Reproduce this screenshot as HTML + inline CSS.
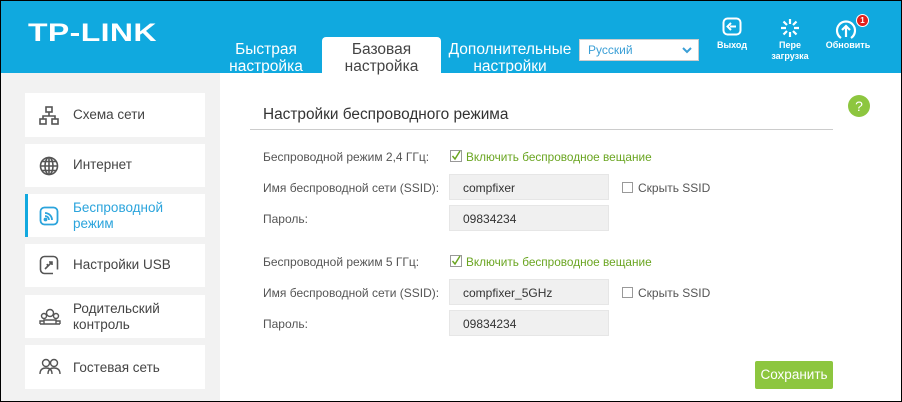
<!DOCTYPE html>
<html><head><meta charset="utf-8">
<style>
*{margin:0;padding:0;box-sizing:border-box}
body{width:902px;height:402px;overflow:hidden;font-family:"Liberation Sans","DejaVu Sans",sans-serif;background:#000}
#wrap{position:absolute;left:1px;top:1px;width:900px;height:400px;background:#fff;overflow:hidden}
.hdr{position:absolute;left:0;top:0;width:900px;height:72px;background:#10a9df}
.logo{position:absolute;left:27px;top:18px;color:#fff;font-weight:bold;font-size:25px;letter-spacing:0.3px;transform:scaleX(1.28);transform-origin:left}
.tab{position:absolute;color:#fff;font-size:15.5px;line-height:17px;text-align:center}
.tab.act{background:#fff;color:#444;border-radius:4px 4px 0 0}
.sel{position:absolute;left:578px;top:38px;width:120px;height:22px;background:#fff;border:1px solid #ccc;color:#3a9fd6;font-size:12px;padding:3px 0 0 8px}
.ic{position:absolute;color:#fff;font-size:9px;font-weight:bold;text-align:center;line-height:11px}
.side{position:absolute;left:0;top:72px;width:219px;height:328px;background:#f2f2f2}
.it{position:absolute;left:24px;width:180px;background:#fff;color:#444;font-size:13.5px}
.it .t{position:absolute;left:48px}
.it svg{position:absolute;left:14px}
.lbl{position:absolute;left:262px;font-size:12px;color:#555}
.inp{position:absolute;left:448px;width:160px;height:26px;background:#f0f0f0;border:1px solid #e6e6e6;font-size:12px;color:#333;padding:6px 0 0 13px}
.grn{position:absolute;left:449px;font-size:11.8px;color:#6aa521}
.cb{display:inline-block;width:11px;height:11px;border:1px solid #999;vertical-align:-1px;margin-right:5px;background:#fff}
.hid{position:absolute;left:621px;font-size:12px;color:#555}
</style></head><body><div id="wrap">
<div class="hdr">
<div class="logo">TP-LINK</div>
<div class="tab" style="left:222px;top:40px;width:86px">Быстрая<br>настройка</div>
<div class="tab act" style="left:321px;top:36px;width:119px;height:37px;padding-top:4px">Базовая<br>настройка</div>
<div class="tab" style="left:444px;top:40px;width:130px">Дополнительные<br>настройки</div>
<div class="sel">Русский<svg style="position:absolute;right:6px;top:7px" width="10" height="7" viewBox="0 0 10 7"><path d="M1 1l4 4 4-4" stroke="#3a9fd6" stroke-width="2" fill="none"/></svg></div>
<svg style="position:absolute;left:721px;top:16px" width="20" height="20" viewBox="0 0 20 20"><rect x="1.5" y="1.5" width="17" height="16" rx="4" fill="none" stroke="#fff" stroke-width="2"/><path d="M14 9.5H8M9 6l-3.5 3.5L9 13" fill="none" stroke="#fff" stroke-width="2"/></svg>
<div class="ic" style="left:710px;top:39px;width:42px">Выход</div>
<svg style="position:absolute;left:779px;top:17px" width="20" height="20" viewBox="0 0 20 20" stroke="#fff" stroke-width="2.2"><path d="M10 1v5M10 14v5M1 10h5M14 10h5M3.5 3.5l3.5 3.5M13 13l3.5 3.5M3.5 16.5L7 13M13 7l3.5-3.5"/></svg>
<div class="ic" style="left:766px;top:39px;width:46px">Пере<br>загрузка</div>
<svg style="position:absolute;left:834px;top:18px" width="22" height="22" viewBox="0 0 22 22"><path d="M6 19A9 9 0 1 1 16 19" fill="none" stroke="#fff" stroke-width="2.2"/><path d="M11 18V7M7 11l4-4 4 4" fill="none" stroke="#fff" stroke-width="2.2"/></svg>
<div style="position:absolute;left:855px;top:13px;width:13px;height:13px;border-radius:50%;background:#e2201d;border:1px solid #fff;color:#fff;font-size:8px;font-weight:bold;text-align:center;line-height:11px">1</div>
<div class="ic" style="left:820px;top:39px;width:54px">Обновить</div>
</div>
<div class="side">
<div class="it" style="top:20px;height:44px"><svg style="top:13px" width="20" height="19" viewBox="0 0 20 19" fill="none" stroke="#555" stroke-width="1.6"><rect x="7" y="1" width="6" height="5"/><rect x="1" y="13" width="6" height="5"/><rect x="13" y="13" width="6" height="5"/><path d="M10 6v4M4 13v-3h12v3"/></svg><span class="t" style="top:14px">Схема сети</span></div>
<div class="it" style="top:71px;height:43px"><svg style="top:12px" width="20" height="20" viewBox="0 0 20 20" fill="none" stroke="#555" stroke-width="1.6"><circle cx="10" cy="10" r="8.5" fill="#fff"/><ellipse cx="10" cy="10" rx="4" ry="8.5"/><path d="M10 1.5v17M1.5 10h17M3 5.5h14M3 14.5h14"/></svg><span class="t" style="top:13px">Интернет</span></div>
<div class="it" style="top:121px;height:43px;color:#2ba4dc"><div style="position:absolute;left:0;top:0;width:3px;height:43px;background:#12a9df"></div><svg style="top:12px" width="20" height="20" viewBox="0 0 20 20" fill="none" stroke="#2ba4dc" stroke-width="1.8"><rect x="1.5" y="1.5" width="17" height="17" rx="4"/><path d="M6 7a7 7 0 0 1 7 7M6 10a4 4 0 0 1 4 4"/><circle cx="6.5" cy="13.5" r="1" fill="#2ba4dc"/></svg><span class="t" style="top:6px;line-height:16px">Беспроводной<br>режим</span></div>
<div class="it" style="top:171px;height:43px"><svg style="top:11px" width="20" height="20" viewBox="0 0 20 20" fill="none" stroke="#555" stroke-width="1.6"><path d="M14 18.5H5.5a4 4 0 0 1-4-4V5.5a4 4 0 0 1 4-4h9a4 4 0 0 1 4 4v9"/><path d="M6 14l7-7M10 7h3v3M8 9l1 2"/></svg><span class="t" style="top:13px">Настройки USB</span></div>
<div class="it" style="top:222px;height:43px"><svg style="top:13px" width="22" height="18" viewBox="0 0 22 18" fill="none" stroke="#555" stroke-width="1.4"><circle cx="11" cy="5" r="3.5"/><circle cx="5" cy="8" r="2.5"/><circle cx="17" cy="8" r="2.5"/><path d="M5 16v-4h12v4M1 16v-3h4M17 13h4v3M1 16h20"/></svg><span class="t" style="top:6px;line-height:16px">Родительский<br>контроль</span></div>
<div class="it" style="top:272px;height:44px"><svg style="top:13px" width="22" height="18" viewBox="0 0 22 18" fill="none" stroke="#555" stroke-width="1.4"><circle cx="7" cy="5" r="3.5"/><circle cx="15" cy="5" r="3.5"/><path d="M1 16c0-5 3-6 6-6s6 1 6 6M9 16c0-5 3-6 6-6s6 1 6 6"/></svg><span class="t" style="top:15px">Гостевая сеть</span></div>
</div>
<div style="position:absolute;left:262px;top:105px;font-size:15.4px;color:#333">Настройки беспроводного режима</div>
<div style="position:absolute;left:249px;top:128px;width:583px;height:1px;background:#ccc"></div>
<div style="position:absolute;left:847px;top:94px;width:22px;height:22px;border-radius:50%;background:#8dc63f;color:#fff;font-size:14px;text-align:center;line-height:22px">?</div>
<div class="lbl" style="top:149px">Беспроводной режим 2,4 ГГц:</div>
<div class="grn" style="top:149px"><svg width="12" height="12" viewBox="0 0 12 12" style="vertical-align:-1px;margin-right:4px"><rect x="0.5" y="0.5" width="11" height="11" fill="#fff" stroke="#999"/><path d="M2.5 6l2.5 3 5-8" stroke="#6aa521" stroke-width="1.5" fill="none"/></svg>Включить беспроводное вещание</div>
<div class="lbl" style="top:180px">Имя беспроводной сети (SSID):</div>
<div class="inp" style="top:173px">compfixer</div>
<div class="hid" style="top:180px"><span class="cb"></span>Скрыть SSID</div>
<div class="lbl" style="top:211px">Пароль:</div>
<div class="inp" style="top:204px">09834234</div>
<div class="lbl" style="top:254px">Беспроводной режим 5 ГГц:</div>
<div class="grn" style="top:254px"><svg width="12" height="12" viewBox="0 0 12 12" style="vertical-align:-1px;margin-right:4px"><rect x="0.5" y="0.5" width="11" height="11" fill="#fff" stroke="#999"/><path d="M2.5 6l2.5 3 5-8" stroke="#6aa521" stroke-width="1.5" fill="none"/></svg>Включить беспроводное вещание</div>
<div class="lbl" style="top:285px">Имя беспроводной сети (SSID):</div>
<div class="inp" style="top:278px">compfixer_5GHz</div>
<div class="hid" style="top:285px"><span class="cb"></span>Скрыть SSID</div>
<div class="lbl" style="top:316px">Пароль:</div>
<div class="inp" style="top:309px">09834234</div>
<div style="position:absolute;left:754px;top:360px;width:78px;height:28px;background:#8dc63f;border-radius:2px;color:#fff;font-size:13.5px;text-align:center;line-height:28px">Сохранить</div>
</div></body></html>
